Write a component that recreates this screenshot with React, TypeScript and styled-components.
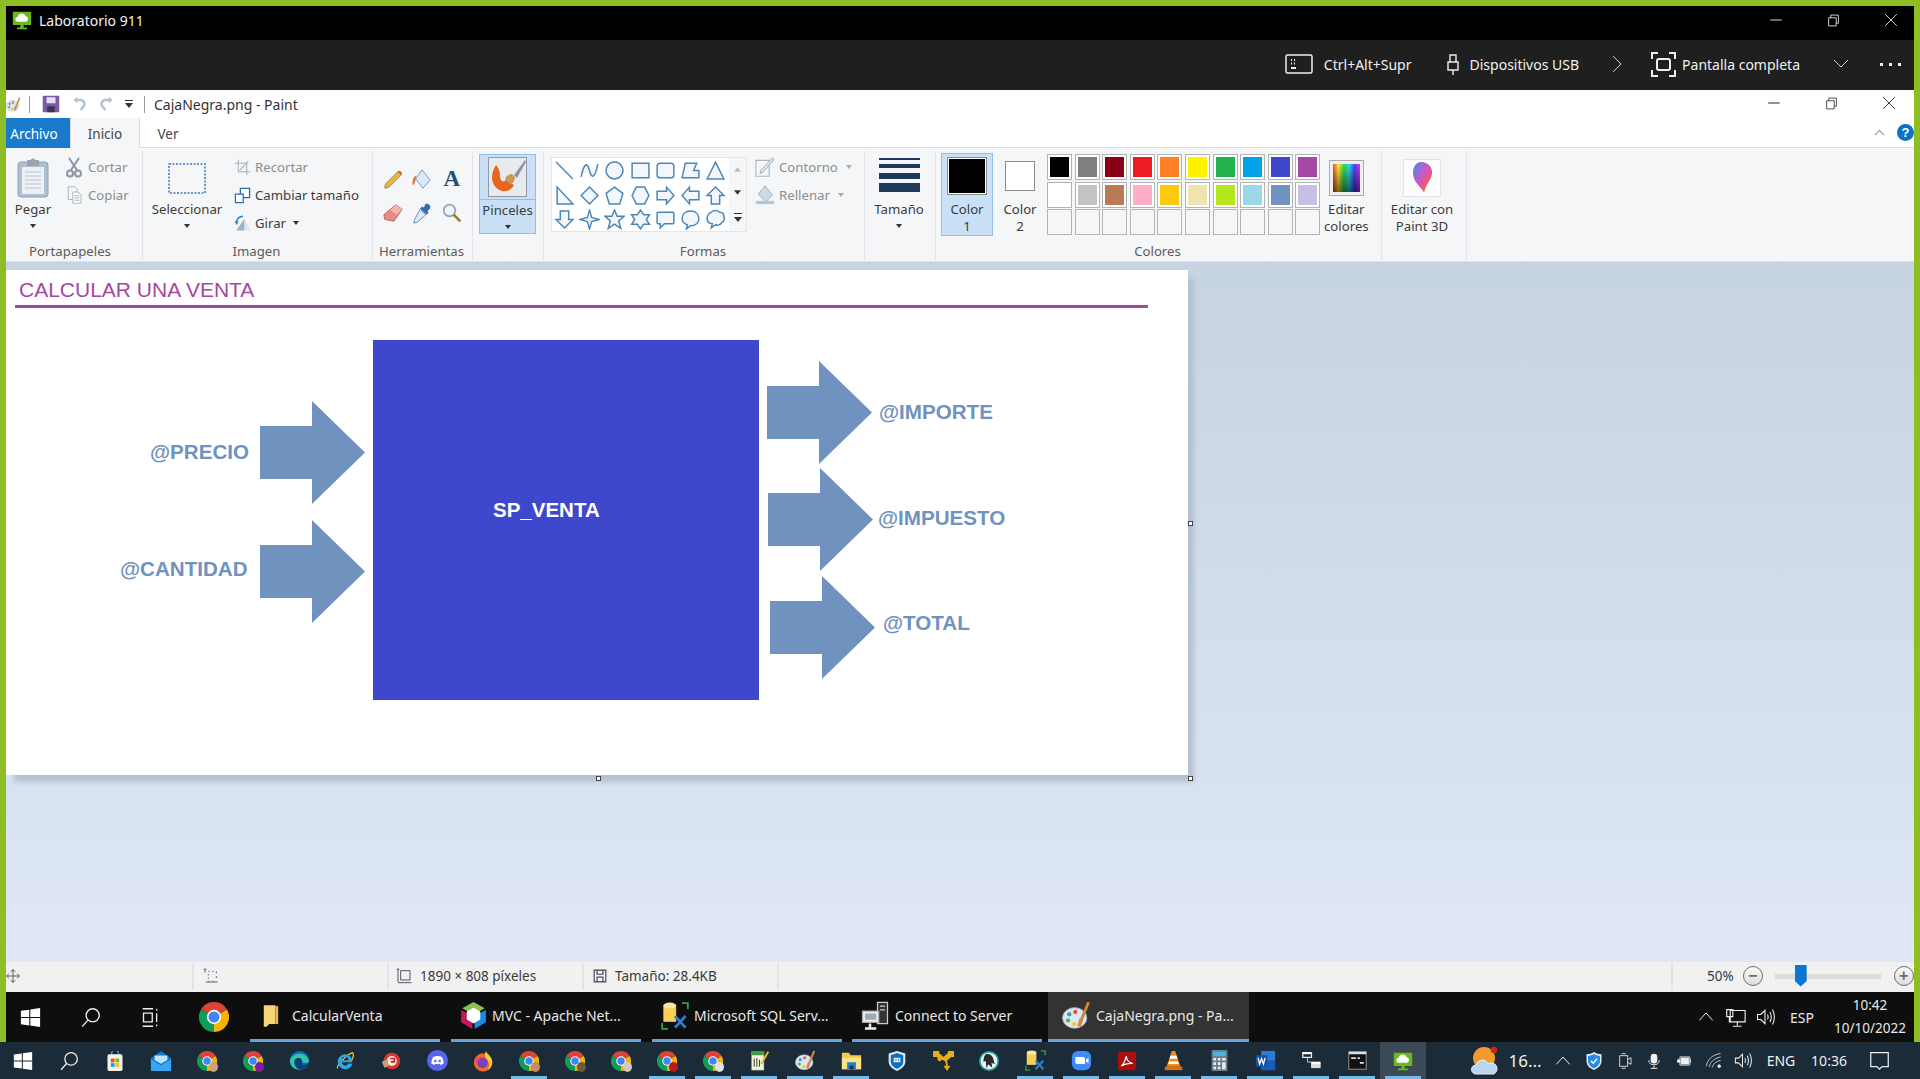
import React from "react";
import styled, { createGlobalStyle } from "styled-components";

const FONT = '"Noto Sans", "Open Sans", sans-serif';
const ARIAL = '"Liberation Sans", Arial, sans-serif';

const Global = createGlobalStyle`
  html, body { margin: 0; padding: 0; background: #1c2b36; overflow: hidden; }
  * { box-sizing: border-box; }
  #root { height: 1079px; }
`;

/* ---------- shell ---------- */
const Page = styled.div`
  width: 1920px; height: 1079px; display: flex; flex-direction: column;
  font-family: ${FONT}; font-size: 14px; color: #3a3a3a;
`;
const Frame = styled.div`
  height: 1042px; display: flex; flex-direction: column;
  border: 6px solid #8fbd24; border-bottom: 0;
`;
const RdpTitle = styled.div`
  height: 34px; flex: none; background: #000; color: #f2f2f2; display: flex; align-items: center;
  padding: 0 0 6px 6px; gap: 7px; font-size: 14px;
`;
const RdpBar = styled.div`
  height: 50px; flex: none; background: #1f1f1f; color: #f0f0f0; display: flex; align-items: center;
  padding-bottom: 2px; font-size: 14px;
`;
const Push = styled.div`flex: 1;`;
const WinButtons = styled.div<{ $dy?: number; $w?: number }>`
  margin-left: auto; margin-top: ${p => p.$dy ?? 0}px; display: flex; align-items: center; width: ${p => p.$w ?? 153}px; padding-left: 8px; gap: 44px;
`;
const BarItem = styled.div<{ $ml: number; $gap?: number }>`
  display: flex; align-items: center; margin-left: ${p => p.$ml}px; gap: ${p => p.$gap ?? 0}px; white-space: nowrap;
`;
const PaintTitle = styled.div`
  height: 28px; flex: none; background: #fff; display: flex; align-items: center; color: #333; font-size: 14px;
`;
const Divider = styled.span<{ $ml: number }>`
  width: 1px; height: 17px; background: #9b9b9b; margin-left: ${p => p.$ml}px;
`;
const Tabs = styled.div`
  height: 30px; flex: none; background: #fff; display: flex; align-items: stretch; font-size: 13.5px;
  border-bottom: 1px solid #dadbdc; position: relative;
`;
const FileTab = styled.div`
  width: 64px; background: #1979ca; color: #fff; display: flex; align-items: center; justify-content: center; margin-bottom: -1px;
  padding: 2px 8px 0 0;
`;
const Tab = styled.div<{ $active?: boolean }>`
  width: ${p => (p.$active ? 70 : 56)}px; display: flex; align-items: center; justify-content: center; padding-top: 2px;
  color: #444;
  ${p => p.$active ? "background:#f5f6f7;border:1px solid #dadbdc;border-bottom:0;border-top:0;margin-bottom:-1px;" : ""}
`;
const TabEnd = styled.div`
  margin-left: auto; display: flex; align-items: center; gap: 12px;
`;
const Help = styled.div`
  width: 17px; height: 17px; border-radius: 50%; background: #0e72c4; color: #fff; font: bold 13px ${ARIAL};
  display: flex; align-items: center; justify-content: center;
`;

/* ---------- ribbon ---------- */
const Ribbon = styled.div`
  height: 114px; flex: none; display: flex; background: #f5f6f7; border-bottom: 1px solid #dfe2e6;
  font-size: 13.2px; padding: 3px 0 1px; color: #3c3c3c;
`;
const Group = styled.section<{ $w: number }>`
  width: ${p => p.$w}px; flex: none; display: flex; flex-direction: column; border-right: 1px solid #e2e4e7;
`;
const GroupBody = styled.div`flex: 1; display: flex; align-items: flex-start; padding-top: 3px;`;
const GroupLabel = styled.div<{ $pr?: number }>`
  height: 17px; line-height: 17px; text-align: center; color: #5b5b5b; font-size: 13.2px; padding-right: ${p => p.$pr ?? 2}px;
`;
const BigTool = styled.div<{ $w: number; $ml?: number }>`
  width: ${p => p.$w}px; margin-left: ${p => p.$ml ?? 0}px; flex: none; display: flex; flex-direction: column; align-items: center;
  padding-top: 3px;
`;
const BigIcon = styled.div`height: 42px; width: 100%; display: flex; align-items: center; justify-content: center; margin-bottom: 2px;`;
const BigLabel = styled.div`line-height: 17px; text-align: center; white-space: nowrap;`;
const Caret = styled.div`
  width: 0; height: 0; border: 3.5px solid transparent; border-top: 4px solid #333; border-bottom: 0; margin-top: 6px;
`;
const InlineCaret = styled(Caret)<{ $muted?: boolean }>`
  margin: 0 0 0 4px; ${p => p.$muted ? "border-top-color:#aaa;" : ""}
`;
const SmallList = styled.div<{ $ml: number }>`margin: -1px 0 0 ${p => p.$ml}px; display: flex; flex-direction: column;`;
const SmallRow = styled.div<{ $muted?: boolean; $gap?: number }>`
  height: 28px; display: flex; align-items: center; gap: ${p => p.$gap ?? 6}px; white-space: nowrap;
  color: ${p => (p.$muted ? "#8d8d8d" : "#3c3c3c")};
`;
const ToolGrid = styled.div`
  margin: 8px 0 0 5px; display: grid; grid-template-columns: repeat(3, 29.5px); grid-auto-rows: 34px;
  place-items: center;
`;
const Brushes = styled.div`
  margin: 0 0 0 6px; width: 57px; height: 80px; background: #c9e0f7; border: 1px solid #90c0ea; display: flex;
  flex-direction: column; align-items: center;
`;
const BrushTop = styled.div`
  width: 100%; height: 45px; display: flex; align-items: center; justify-content: center; border-bottom: 1px solid #90c0ea; margin-bottom: 2px;
`;
const Gallery = styled.div`
  margin: 3px 0 0 7px; width: 196px; height: 75px; border: 1px solid #e3e5e8; display: flex; flex: none;
`;
const ShapeGrid = styled.div`
  width: 177px; background: #fff; display: grid; grid-template-columns: repeat(7, 25.2px); grid-auto-rows: 24.7px; place-items: center;
`;
const GalleryScroll = styled.div`
  flex: 1; display: flex; flex-direction: column; align-items: center; justify-content: space-around; color: #444;
`;
const Lines = styled.div`
  width: 41px; height: 35px; margin-bottom: 6px; display: flex; flex-direction: column; justify-content: space-between;
`;
const Line = styled.div<{ $h: number }>`height: ${p => p.$h}px; background: #1d3a5c;`;
const ColorSlot = styled.div<{ $active?: boolean }>`
  width: 52px; height: 83px; margin: -1px 0 0 ${p => (p.$active ? 5 : 1)}px; flex: none; display: flex; flex-direction: column; align-items: center;
  ${p => p.$active ? "background:#c9e0f7;border:1px solid #90c0ea;" : "border:1px solid transparent;"}
`;
const SwatchWrap = styled.div`height: 47px; display: flex; align-items: center; justify-content: center; margin-bottom: 4px;`;
const BigSwatch = styled.div<{ $c: string; $s: number; $h: number }>`
  width: ${p => p.$s}px; height: ${p => p.$h}px; background: ${p => p.$c}; border: 1px solid #8c8c8c; outline: 1px solid #fff; outline-offset: -2px;
`;
const Palette = styled.div`
  margin: 0 0 0 1px; display: grid; grid-template-columns: repeat(10, 25px); grid-auto-rows: 26px; gap: 1.5px 2.6px; flex: none;
`;
const Cell = styled.div<{ $c?: string }>`
  border: 1px solid #b4b4b4; padding: 2px; background: ${p => (p.$c ? "#fff" : "#f5f6f7")};
  &::after { content: ""; display: block; width: 100%; height: 100%; background: ${p => p.$c ?? "transparent"}; }
`;
const RainbowBox = styled.div`
  width: 35px; height: 36px; padding: 3px; background: #eee; border: 1px solid #aaa;
  & > div { height: 100%; background:
     linear-gradient(to bottom, rgba(255,255,255,.1), rgba(0,0,0,.55)),
     linear-gradient(to right, #ff3030, #ffee20, #20d040, #20d0e0, #3030ff, #e020e0); }
`;

/* ---------- canvas ---------- */
const Canvas = styled.main`
  flex: 1; min-height: 0; background: linear-gradient(#c6d3e0, #dfe8f4); padding-top: 8px; position: relative;
`;
const Sheet = styled.div`
  width: 1182px; height: 505px; background: #fff; position: relative; box-shadow: 7px 8px 5px -1px #b4c1d2;
  font-family: ${ARIAL};
`;
const SheetTitle = styled.div`
  position: absolute; left: 13px; top: 8px; font-size: 21px; line-height: 24px; color: #a3479f; white-space: nowrap;
`;
const SheetRule = styled.div`position: absolute; left: 9px; top: 35px; width: 1133px; height: 3px; background: #9f4d9f;`;
const BlueBox = styled.div`
  position: absolute; left: 367px; top: 70px; width: 386px; height: 360px; background: #3f48cc;
`;
const BoxLabel = styled.div`
  position: absolute; left: 120px; top: 158px; color: #fff; font-weight: bold; font-size: 20.5px; line-height: 24px;
`;
const ArrowShape = styled.svg<{ $x: number; $y: number }>`
  position: absolute; left: ${p => p.$x}px; top: ${p => p.$y}px; width: 105px; height: 103px;
`;
const Param = styled.div<{ $x: number; $y: number }>`
  position: absolute; left: ${p => p.$x}px; top: ${p => p.$y}px; color: #7092be; font-weight: bold; font-size: 20.6px; line-height: 26px; white-space: nowrap;
`;
const Handle = styled.div<{ $x: number; $y: number }>`
  position: absolute; left: ${p => p.$x}px; top: ${p => p.$y}px; width: 5px; height: 5px; border: 1px solid #444; background: #fff;
`;

/* ---------- status ---------- */
const Status = styled.footer`
  height: 31px; flex: none; background: #f1f1f1; border-top: 1px solid #e3e5e8; display: flex; align-items: center; font-size: 13.5px; color: #3a3a3a;
  padding-bottom: 2px;
`;
const StatusCell = styled.div<{ $w: number; $pl: number }>`
  width: ${p => p.$w}px; height: 27px; border-right: 2px solid #e4e4e4; padding-left: ${p => p.$pl}px; display: flex; align-items: center; gap: 8px; white-space: nowrap;
`;
const ZoomBox = styled.div`
  margin-left: auto; width: 243px; height: 27px; border-left: 2px solid #e4e4e4; display: flex; align-items: center; padding-left: 34px;
`;
const ZoomPct = styled.span`margin-right: 9px;`;
const ZoomTrack = styled.div`
  width: 106px; height: 5px; background: #dcdcdc; margin: 0 13px 0 12px; position: relative;
`;
const ZoomThumb = styled.div`
  position: absolute; left: 20px; top: -9px; width: 12px; height: 22px; background: #0a78d2;
  clip-path: polygon(0 0, 100% 0, 100% 75%, 50% 100%, 0 75%);
`;
const RoundBtn = styled.div`
  width: 20px; height: 20px; border-radius: 50%; border: 1.5px solid #6d6d6d; display: flex; align-items: center; justify-content: center;
  font: bold 16px ${ARIAL}; color: #6d6d6d; flex: none; background: linear-gradient(#fafafa, #dcdcdc);
`;

/* ---------- inner taskbar ---------- */
const InnerBar = styled.nav`
  height: 50px; flex: none; background: #0e0e0e; color: #e8e8e8; display: flex; align-items: center; font-size: 14px;
`;
const InnerSlot = styled.div<{ $w: number; $ml: number }>`
  width: ${p => p.$w}px; margin-left: ${p => p.$ml}px; flex: none; display: flex; align-items: center; justify-content: center;
`;
const AppBtn = styled.div<{ $w?: number; $ml: number; $active?: boolean; $pl: number; $gap?: number }>`
  width: ${p => p.$w ?? 190}px; margin-left: ${p => p.$ml}px; height: 50px; flex: none; display: flex; align-items: center; gap: ${p => p.$gap ?? 5}px;
  padding-left: ${p => p.$pl}px; border-bottom: 3px solid #6a9fd8; white-space: nowrap;
  background: ${p => (p.$active ? "#333" : "transparent")};
`;
const Tray = styled.div`
  margin-left: auto; display: flex; align-items: center; color: #e8e8e8;
`;
const TrayItem = styled.div<{ $w: number; $ml?: number }>`
  width: ${p => p.$w}px; margin-left: ${p => p.$ml ?? 0}px; flex: none; display: flex; align-items: center; justify-content: center; white-space: nowrap;
`;
const Clock = styled.div`
  width: 70px; margin: 0 9px 0 21px; display: flex; flex-direction: column; align-items: center; font-size: 13.5px; line-height: 23px;
`;

/* ---------- outer taskbar ---------- */
const OuterBar = styled.nav`
  height: 37px; flex: none; background: #1b2b37; display: flex; align-items: stretch; color: #f0f0f0; font-size: 14px;
`;
const Slot = styled.div<{ $on?: boolean; $cur?: boolean }>`
  width: 46px; flex: none; display: flex; align-items: center; justify-content: center; position: relative;
  background: ${p => (p.$cur ? "#3b4a55" : "transparent")};
  ${p => p.$on ? `&::after{content:"";position:absolute;left:5px;right:5px;bottom:0;height:3px;background:#76b9ed;}` : ""}
`;
const OuterTray = styled.div`margin-left: auto; display: flex; align-items: center; color: #f0f0f0;`;
const OTray = styled.div<{ $w: number; $ml?: number; $fs?: number }>`
  width: ${p => p.$w}px; margin-left: ${p => p.$ml ?? 0}px; flex: none; display: flex; align-items: center; justify-content: center;
  white-space: nowrap; font-size: ${p => p.$fs ?? 14}px;
`;
const Stack = styled.div`position: relative; display: inline-flex;`;
const Badge = styled.span<{ $c: string }>`
  position: absolute; right: -1px; bottom: -1px; width: 9px; height: 10px; border-radius: 50%; background: ${p => p.$c};
`;
const BlockSvg = styled.svg`display: block; flex: none;`;
const AText = styled.span`font: bold 23px "Liberation Serif", serif; color: #1f4e79; line-height: 22px;`;

/* ---------- icons ---------- */
type P = { s?: number; h?: number; c?: string };
const Svg: React.FC<React.PropsWithChildren<{ s: number; h?: number; vb?: string; sc?: string; sw?: number }>> = ({ s, h, vb = "0 0 24 24", sc, sw, children }) => (
  <BlockSvg width={s} height={h ?? s} viewBox={vb} fill="none" stroke={sc} strokeWidth={sw}>{children}</BlockSvg>
);
const WinLogo = ({ s = 20 }: P) => (
  <Svg s={s}><path fill="#fff" d="M1 4.200 10.600 3v8.500H1zM11.800 2.800 23 1.200v10.300H11.800zM1 12.600h9.600V21L1 19.800zM11.800 12.600H23v10.200l-11.200-1.600z" /></Svg>
);
const SearchI = ({ s = 20 }: P) => (
  <Svg s={s} sc="#f0f0f0" sw={1.500}><circle cx="14.500" cy="9.500" r="7.500" /><path d="M9 15 2.500 22.500" /></Svg>
);
const TaskView = ({ s = 20 }: P) => (
  <Svg s={s} sc="#eee" sw={1.500}><path d="M3 2h12M3 22h12M4 7h10v10H4zM19 2v2M19 7v10M19 20v2" /></Svg>
);
const Chrome = ({ s = 20 }: P) => (
  <Svg s={s} vb="3 3 42 42">
    <path fill="#db4437" d="M24 24 5.800 13.500A21 21 0 0 1 42.200 13.500Z" />
    <path fill="#f4b400" d="M24 24 42.200 13.500A21 21 0 0 1 24 45Z" />
    <path fill="#0f9d58" d="M24 24 24 45A21 21 0 0 1 5.800 13.500Z" />
    <circle cx="24" cy="24" r="10" fill="#fff" /><circle cx="24" cy="24" r="7.800" fill="#4285f4" />
  </Svg>
);
const ChromeB = ({ c }: { c: string }) => <Stack><Chrome /><Badge $c={c} /></Stack>;
const FolderI = ({ s = 20, h = 24 }: P) => (
  <Svg s={s} h={h} vb="0 0 20 26"><path fill="#f5d576" d="M2 1h13v21H8l-3 3H2z" /><path fill="#e5b94e" d="M15 2h3v20h-3z" /></Svg>
);
const Hexa = ({ s = 26 }: P) => (
  <Svg s={s}>
    <path fill="#8bc34a" d="M12 0 22 5.500 12 11 2 5.500z" /><path fill="#c2185b" d="M1 7l10 5.500V24L1 18z" /><path fill="#1e88e5" d="M23 7 13 12.500V24l10-6z" />
    <path fill="#fff" d="M12 5 18 8.500v7L12 19l-6-3.500v-7z" />
  </Svg>
);
const Ssms = ({ s = 26 }: P) => (
  <Svg s={s}>
    <path fill="none" stroke="#2e9e4f" strokeWidth="1.600" d="M18 1h5v5M1 18v5h5" />
    <path fill="#f6cf57" d="M2 3h11v14H2z" /><ellipse cx="7.500" cy="3" rx="5.500" ry="2.500" fill="#fbe6a0" />
    <path fill="none" stroke="#2a7fd0" strokeWidth="2.400" d="M12 22l9-10M21 22l-9-10" />
  </Svg>
);
const Connect = ({ s = 30 }: P) => (
  <Svg s={s} sc="#ccc" sw={1}>
    <path fill="#333" d="M14 1h8v17h-8z" /><path d="M16 4h4M16 7h4" />
    <path fill="#eee" stroke="#aaa" d="M2 8h13v9H2z" /><path fill="#9ab" stroke="none" d="M4 10h9v5H4z" />
    <path stroke="#eee" strokeWidth="2" d="M8 18v3M4 22h9" />
  </Svg>
);
const Palette3 = ({ s = 28 }: P) => (
  <Svg s={s}>
    <ellipse cx="10.500" cy="14" rx="10" ry="8.500" fill="#dce7f0" stroke="#a3b4c4" strokeWidth=".8" />
    <circle cx="6" cy="11" r="1.800" fill="#3f9ad8" /><circle cx="11" cy="9" r="1.700" fill="#e94e3d" /><circle cx="5" cy="16" r="1.800" fill="#5bb450" />
    <circle cx="10" cy="19" r="1.700" fill="#f5c22e" />
    <path stroke="#c9893a" strokeWidth="2.400" d="M22 1l-7 17" /><path stroke="#e08535" strokeWidth="3" d="M16 15l-2 6" />
  </Svg>
);
const Store = () => (
  <Svg s={20}>
    <path fill="none" stroke="#29a3e8" strokeWidth="1.500" d="M8 5V3a4 4 0 0 1 8 0v2" />
    <rect x="3" y="4" width="18" height="20" rx="2" fill="#f4f1ea" />
    <path fill="#f25022" d="M7 9h4.500v4.500H7z" /><path fill="#7fba00" d="M12.500 9H17v4.500h-4.500z" /><path fill="#00a4ef" d="M7 14.500h4.500V19H7z" /><path fill="#ffb900" d="M12.500 14.500H17V19h-4.500z" />
  </Svg>
);
const Mail = () => (
  <Svg s={22}><path fill="#0f78d4" d="M1 9 12 1l11 8v14H1z" /><path fill="#39a7ee" d="M1 10l11 7 11-7v13H1z" /><path fill="#bfe3fb" d="M5 6h14v5l-7 4-7-4z" /></Svg>
);
const Edge = () => (
  <Svg s={21}>
    <circle cx="12" cy="12" r="11" fill="#0f6cbd" />
    <path fill="#35c1a4" d="M1 12C3 3 20 0 23 13c-3 3-8 2-9-1 0-3-5-4-7-1-2 4 0 9 5 11C6 23 1 18 1 12z" />
    <path fill="#0c3f78" d="M7 11c3-3 8-2 8 2-2 5 5 5 8 1-2 6-9 10-13 7-3-2-5-7-3-10z" />
  </Svg>
);
const IE = () => (
  <Svg s={20}>
    <path fill="none" stroke="#f3c31c" strokeWidth="1.500" d="M3 21C1 17 15 4 21 2c3 3-1 9-2 10" />
    <path fill="#2da7e6" fillRule="evenodd" d="M12 4a9 9 0 0 1 9 9.500H8a4.200 4.200 0 0 0 8 1.500h5a9 9 0 1 1-9-11zM8 11h8a4 4 0 0 0-8 0z" />
  </Svg>
);
const RedDisc = () => (
  <Svg s={20}>
    <circle cx="13" cy="12" r="10" fill="#d5392b" /><circle cx="13" cy="12" r="6" fill="#f7e9e2" />
    <path fill="#c9a07c" d="M1 13l7-3 1 8-5 2z" /><path stroke="#c22" strokeWidth="2" d="M11 9h5v4h-4" />
  </Svg>
);
const Discord = () => (
  <Svg s={21}>
    <circle cx="12" cy="12" r="12" fill="#5865f2" />
    <path fill="#fff" d="M7 8c3-1.400 7-1.400 10 0 1.500 2.500 2 5 2 7.500-1.500 1-2.500 1.500-3.500 1.600l-.8-1.300c-2 .6-3.400.6-5.400 0l-.8 1.300C8 17 6.500 16.500 5 15.500 5 13 5.500 10.500 7 8z" />
    <circle cx="9.500" cy="12.500" r="1.400" fill="#5865f2" /><circle cx="14.500" cy="12.500" r="1.400" fill="#5865f2" />
  </Svg>
);
const Firefox = () => (
  <Svg s={22}>
    <circle cx="12" cy="13.500" r="10" fill="#f26b21" />
    <path fill="#ffcb2f" d="M15 1c1 3 6 5 7 11 1 4-2 9-5 10 3-4 2-10-2-13-1-2-1-5 0-8z" />
    <circle cx="11.500" cy="14" r="5.800" fill="#7a3fc4" /><path fill="#e8467c" d="M4 10c3-3 7-3 9-2-3 0-4 2-5 3-2 1-3 3-1 7-3-2-4-5-3-8z" />
  </Svg>
);
const Notepad = () => (
  <Svg s={21}>
    <path fill="#f3f6d8" stroke="#9aa" strokeWidth=".6" d="M3 2h14v21H3z" /><path fill="#3f9c3f" d="M3 2h14v4H3z" />
    <path stroke="#444" strokeWidth="1.200" d="M6 10v9M9 9v10M12 11v8" /><path stroke="#e6b93b" strokeWidth="2.200" d="M22 2 14 16" />
  </Svg>
);
const Explorer = () => (
  <Svg s={21}>
    <path fill="#f7c948" d="M1 3h8l2 3h12v16H1z" /><path fill="#fbe38e" d="M1 9h22v13H1z" />
    <path fill="#1c7fd0" d="M7 14h10v8H7z" /><path fill="#1b2b37" d="M10 18h4v4h-4z" />
  </Svg>
);
const ShieldGrid = () => (
  <Svg s={20}>
    <path fill="#dfe9f4" d="M12 0 22 3v10c0 5-5 9-10 11C7 22 2 18 2 13V3z" /><path fill="#0e6fc1" d="M12 2.500 19.500 5v8c0 4-4 7-7.500 8.500C8.500 20 4.500 17 4.500 13V5z" />
    <path fill="#fff" d="M8 8h2.500v2.500H8zM11 8h2.500v2.500H11zM14 8h2v2.500h-2zM8 11h2.500v2.500H8zM11 11h2.500v2.500H11zM14 11h2v2.500h-2z" />
  </Svg>
);
const YellowArrows = () => (
  <Svg s={21}>
    <path fill="#e6ad1e" d="M0 1h7v2.500L12 8l5-4.500V1h7v7h-3l-5 4 1 6h3l-4 6-4-6h3l-1-5-3-2-4 2-2-2.500V8H0z" />
  </Svg>
);
const Orb = () => (
  <Svg s={20}>
    <circle cx="12" cy="12" r="11" fill="#e9f4f2" stroke="#23a0a0" strokeWidth="2" />
    <path fill="#2b2b2b" d="M8 4c4-1 8 1 9 5l2 7-4-2 1 6-5-4-2 5-1-9-3 1c1-3 0-6 3-9z" />
  </Svg>
);
const Zoom = () => (
  <Svg s={21}><rect x="1" y="1" width="22" height="22" rx="7" fill="#3d8bfd" /><path fill="#fff" d="M5 8h9a2 2 0 0 1 2 2v6H7a2 2 0 0 1-2-2zM17 11l3-2.500v7L17 13z" /></Svg>
);
const Pdf = () => (
  <Svg s={20}><rect x="1" y="1" width="22" height="22" rx="3" fill="#a90f0f" /><path fill="none" stroke="#fff" strokeWidth="1.500" d="M5 18c3-2 5-7 6-12 .5 5 3 8 8 9-5-.5-10 .5-14 3z" /></Svg>
);
const Vlc = () => (
  <Svg s={21}>
    <path fill="#f08a1c" d="M10 1h4l6 18H4z" /><path fill="#fff" d="M8.500 6.500h7l1 3.500h-9zM7 13h10l1 3H6z" /><path fill="#e26d12" d="M2 19h20v4H2z" />
  </Svg>
);
const Calc = () => (
  <Svg s={17} h={21} vb="0 0 18 24">
    <rect width="18" height="24" rx="1" fill="#6f7d89" /><path fill="#45b6e6" d="M2 2h14v5H2z" />
    <path fill="#e8eef3" d="M2 9h3v3H2zM7 9h3v3H7zM12 9h4v3h-4zM2 14h3v3H2zM7 14h3v3H7zM12 14h4v8h-4zM2 19h3v3H2zM7 19h3v3H7z" />
  </Svg>
);
const Word = () => (
  <Svg s={21}>
    <path fill="#2b7cd3" d="M7 1h16v22H7z" /><path fill="#185abd" d="M7 12h16v11H7z" /><rect x="1" y="6" width="13" height="13" fill="#1253a8" />
    <path fill="none" stroke="#fff" strokeWidth="1.500" d="M3.500 9l1.800 7 2.200-6 2.200 6 1.800-7" />
  </Svg>
);
const NetWin = () => (
  <Svg s={19}>
    <path fill="#222" stroke="#eee" strokeWidth="1.500" d="M1 2h11v6H1z" /><path stroke="#eee" d="M7 8v6h5" /><path fill="#ddd" stroke="#eee" d="M12 14h11v7H12z" /><path fill="#fff" d="M1 2h11v2H1zM12 14h11v2H12z" />
  </Svg>
);
const Cmd = () => (
  <Svg s={19}><rect x="1" y="1" width="22" height="22" fill="#111" stroke="#999" strokeWidth="1.200" /><path fill="#ddd" d="M1 1h22v3H1zM4 8h6v2H4zM12 8h3v2h-3zM15 14h5v2h-5z" /></Svg>
);
const MonitorGreen = ({ s = 20 }: P) => (
  <Svg s={s}>
    <rect x="1" y="2" width="22" height="16" rx="1" fill="#6ab820" /><path fill="#6ab820" d="M10 18h4v3h4v2H6v-2h4z" />
    <path fill="#fff" d="M7 14a3 3 0 0 1 0-6 5 5 0 0 1 9.500-.5A3.400 3.400 0 0 1 17 14z" />
  </Svg>
);
const Weather = () => (
  <Svg s={30} vb="0 0 30 30">
    <circle cx="14" cy="12" r="11" fill="#f29a2e" /><circle cx="24" cy="4" r="3.200" fill="#c5281c" />
    <path fill="#b8d6f2" stroke="#e2eefa" d="M6 28a4.500 4.500 0 0 1 0-9 6.500 6.500 0 0 1 12-1.500A5.500 5.500 0 0 1 24 28z" />
  </Svg>
);
const Shield = () => (
  <Svg s={18} h={20}>
    <path fill="#e4eef8" d="M12 0c3 2 6 3 10 3v9c0 6-5 10-10 12C7 22 2 18 2 12V3c4 0 7-1 10-3z" /><path fill="#2a8ae6" d="M12 2.500c2.500 1.500 5 2.500 8 2.500v7c0 5-4 8-8 9.800C8 20 4 17 4 12V5c3 0 5.500-1 8-2.500z" />
    <path fill="none" stroke="#fff" strokeWidth="2" d="M8 12l3 3 5-6" />
  </Svg>
);
const Speaker = ({ s = 20 }: P) => (
  <Svg s={s} sc="#eee" sw={1.300}><path d="M3 9h4l5-5v16l-5-5H3zM15 9c1 2 1 4 0 6M18 6c2 4 2 8 0 12M21 3c3 6 3 12 0 18" /></Svg>
);
const Up = ({ s = 16 }: P) => (<Svg s={s} sc="#eee" sw={1.500}><path d="M2 17 12 6l10 11" /></Svg>);

/* ribbon icons */
const Clipboard = () => (
  <Svg s={34} h={40} vb="0 0 34 40">
    <rect x="2" y="4" width="30" height="35" rx="3" fill="#aebfd2" stroke="#8fa3b8" />
    <rect x="6" y="9" width="22" height="27" fill="#eef1f4" />
    <path stroke="#b9c4d1" d="M9 14h16M9 18h16M9 22h16M9 26h16M9 30h16" />
    <rect x="11" y="2" width="12" height="6" rx="1" fill="#9aa4ae" /><circle cx="17" cy="3" r="2.500" fill="#9aa4ae" />
  </Svg>
);
const Scissors = () => (
  <Svg s={16} h={21} vb="0 0 16 21" sc="#8996a3" sw={2}><path d="M3 1l8 12M13 1 5 13" /><circle cx="4" cy="16.500" r="3" /><circle cx="12" cy="16.500" r="3" /></Svg>
);
const CopyI = () => (
  <Svg s={18} h={20} sc="#a5afba" sw={1.200}><path fill="#f5f6f7" d="M3 1h9l3 3v14H3z" /><path fill="#fff" d="M9 8h7l4 4v11H9z" /><path d="M11 13h7M11 16h7M11 19h7" /></Svg>
);
const SelectRect = () => (<BlockSvg width="38" height="31"><rect x="1" y="1" width="36" height="29" fill="none" stroke="#3c78b5" strokeWidth="1.500" strokeDasharray="2 1.500" /></BlockSvg>);
const CropI = () => (
  <Svg s={17} sc="#a9b1ba" sw={1.500}><path d="M6 1v17h17M1 6h17v17" /><path d="M8 16 20 3" /></Svg>
);
const ResizeI = () => (
  <Svg s={17} sc="#2a6db5" sw={1.800}><path fill="#fff" d="M9 2h13v13H9z" /><path fill="#fff" d="M2 10h11v12H2z" /></Svg>
);
const RotateI = () => (
  <Svg s={18}><path fill="#9bb0c4" d="M3 22 14 6v16z" /><path fill="#dfe5eb" d="M14 6l8 16h-8z" /><path fill="none" stroke="#1f86d0" strokeWidth="2" d="M3 12C4 6 8 3 12 3" /><path fill="#1f86d0" d="M1 10h5l-2.500 5z" /></Svg>
);
const Pencil = () => (<Svg s={20}><path fill="#e4b54a" stroke="#a97d22" d="M18 3l4 4L7 22l-5 1 1-5z" /><path fill="#c5533a" d="M18 3l2-1 3 3-1 2z" /></Svg>);
const Bucket = () => (<Svg s={22}><path fill="#dbe8f5" stroke="#6a96bf" d="M12 2l9 11-8 9-8-10z" /><path fill="#e9743a" d="M6 8C2 10 1 15 2 19c3-2 3-7 4-11z" /></Svg>);
const TextA = () => (<AText>A</AText>);
const Eraser = () => (<Svg s={22}><path fill="#e58a85" stroke="#b86460" d="M15 3l7 5-9 13-10-2-1-5z" /><path fill="#f4b4ac" d="M15 3l7 5-6 6-7-5z" /></Svg>);
const Dropper = () => (<Svg s={22}><path fill="#2f6fa6" d="M16 2c3-1 6 2 5 5l-3 3 1 2-2 2-7-7 2-2 2 1z" /><path fill="#dcebf7" stroke="#5a8ab5" d="M10 8l6 6-9 8-4 1 1-4z" /></Svg>);
const Magnifier = () => (<Svg s={20}><circle cx="9" cy="9" r="7" fill="#eef4fa" stroke="#8ea4b9" strokeWidth="2" /><path stroke="#a66f30" strokeWidth="3" d="M14 14l8 8" /></Svg>);
const BrushBig = () => (
  <BlockSvg width="39" height="40" viewBox="0 0 39 40">
    <rect x=".5" y=".5" width="38" height="39" fill="#e8ebee" stroke="#8f9aa4" />
    <path fill="#e8651d" d="M8 8c-6 9-6 22 6 26 6 1 10-2 12-6l-8-5c-3 3-6 1-6-4 0-4-1-8-4-11z" />
    <path fill="#c8995a" d="M17 22c2-4 5-5 7-5l3 3c0 3-2 7-5 7z" />
    <path fill="#8d98a6" d="M26 18 37 3l1 2-9 16z" />
  </BlockSvg>
);
const Contour = () => (<Svg s={20}><path fill="#f5f6f7" stroke="#a8b6c4" strokeWidth="1.300" d="M1 4h16v19H1z" /><path fill="#dfe5eb" stroke="#93a3b3" d="M21 1l2 2-13 15-4 2 1-4z" /></Svg>);
const Fill = () => (<Svg s={20}><path fill="#cfd9e3" stroke="#94a7ba" d="M12 1l9 11-8 8-9-9z" /><path fill="#b7c6d5" d="M1 19h22v4H1z" /></Svg>);
const P3D = () => (
  <BlockSvg width="38" height="38" viewBox="0 0 38 38">
    <defs>
      <linearGradient id="p3d" x1="0" y1="0" x2="1" y2="1"><stop offset="0" stopColor="#3d8fe8" /><stop offset=".45" stopColor="#c95ac6" /><stop offset=".7" stopColor="#f0566a" /><stop offset="1" stopColor="#f5a030" /></linearGradient>
    </defs>
    <rect x=".5" y=".5" width="37" height="37" fill="#fdfdfd" stroke="#e4e4e4" />
    <path fill="url(#p3d)" d="M18 3c7 0 12 5 11 12-1 6-6 10-8 19-2-6-11-10-11-20 0-6 3-11 8-11z" />
  </BlockSvg>
);

const SHAPES: string[] = [
  "M2 2 18 18", "M2 16C5 2 8 2 10 10S15 18 18 4", "M10 2a8 8 0 1 0 .01 0z", "M2 3h16v14H2z", "M5 3h10a3 3 0 0 1 3 3v8a3 3 0 0 1-3 3H5a3 3 0 0 1-3-3V6a3 3 0 0 1 3-3z", "M2 17 5 3h11l-3 7h5v7z", "M10 2 18 18H2z",
  "M3 2V18H18z", "M10 2 18 10 10 18 2 10z", "M10 2 18 8 15 18H5L2 8z", "M6 2h8l4 8-4 8H6l-4-8z", "M2 6h9V2l7 8-7 8v-4H2z", "M18 6H9V2l-7 8 7 8v-4h9z", "M10 2l8 8h-4v8H6v-8H2z",
  "M10 18l8-8h-4V2H6v8H2z", "M10 1l2 7 7 2-7 2-2 7-2-7-7-2 7-2z", "M10 1l2.500 6H19l-5 4.500 2 7-6-4-6 4 2-7-5-4.500h6.500z", "M10 1l3 4.500h5.500l-3 4.500 3 4.500H13l-3 4.500-3-4.500H1.500l3-4.500-3-4.500H7z", "M3 3h14a1 1 0 0 1 1 1v9a1 1 0 0 1-1 1H9l-4 4v-4H3a1 1 0 0 1-1-1V4a1 1 0 0 1 1-1z", "M10 2c5 0 8 3 8 7s-3 7-8 7l-4 3 1-4C4 14 2 12 2 9c0-4 3-7 8-7z", "M6 3c2-2 6-2 8 0 3 0 4 2 4 4 1 2 0 5-2 6-1 2-4 3-6 2l-4 3 1-4C4 14 2 12 2 9c0-3 2-5 4-6z",
];
const Shape = ({ d }: { d: string }) => (
  <BlockSvg width="21" height="21" viewBox="0 0 20 20"><path d={d} fill="#f1f7fc" stroke="#4d86b5" strokeWidth="1.400" /></BlockSvg>
);

const ROW1 = ["#000000", "#7f7f7f", "#880015", "#ed1c24", "#ff7f27", "#fff200", "#22b14c", "#00a2e8", "#3f48cc", "#a349a4"];
const ROW2 = ["#ffffff", "#c3c3c3", "#b97a57", "#ffaec9", "#ffc90e", "#efe4b0", "#b5e61d", "#99d9ea", "#7092be", "#c8bfe7"];

const Arrow = ({ x, y }: { x: number; y: number }) => (
  <ArrowShape $x={x} $y={y} viewBox="0 0 105 103"><polygon points="0,25 52,25 52,0 105,51.500 52,103 52,78 0,78" fill="#7092be" /></ArrowShape>
);

const SLOTS: { i: React.ReactNode; on?: boolean; cur?: boolean }[] = [
  { i: <WinLogo /> }, { i: <SearchI /> }, { i: <Store /> }, { i: <Mail /> },
  { i: <ChromeB c="#c9a27e" /> }, { i: <ChromeB c="#7b1fa2" /> }, { i: <Edge /> }, { i: <IE /> }, { i: <RedDisc /> }, { i: <Discord /> }, { i: <Firefox /> },
  { i: <ChromeB c="#c98a60" />, on: true }, { i: <ChromeB c="#6b5a40" /> }, { i: <ChromeB c="#d8c8c0" /> }, { i: <ChromeB c="#b71c1c" />, on: true }, { i: <ChromeB c="#dfe3e8" />, on: true },
  { i: <Notepad />, on: true }, { i: <Palette3 s={21} />, on: true }, { i: <Explorer />, on: true }, { i: <ShieldGrid /> }, { i: <YellowArrows /> }, { i: <Orb /> },
  { i: <Ssms s={21} />, on: true }, { i: <Zoom />, on: true }, { i: <Pdf />, on: true }, { i: <Vlc />, on: true }, { i: <Calc />, on: true }, { i: <Word />, on: true }, { i: <NetWin />, on: true },
  { i: <Cmd />, on: true }, { i: <MonitorGreen />, on: true, cur: true },
];

export default function App() {
  return (
    <Page>
      <Global />
      <Frame>
        <RdpTitle>
          <MonitorGreen s={20} />
          <span>Laboratorio 911</span>
          <WinButtons>
            <Svg s={14} sc="#eee" sw={1.500}><path d="M2 12h20" /></Svg>
            <Svg s={13} sc="#eee" sw={1.600}><path d="M3 7h14v15H3zM7 7V2h14v15h-4" /></Svg>
            <Svg s={14} sc="#eee" sw={1.500}><path d="M2 2l20 20M22 2 2 22" /></Svg>
          </WinButtons>
        </RdpTitle>
        <RdpBar>
          <Push />
          <BarItem $ml={0} $gap={11}>
            <BlockSvg width="28" height="20" viewBox="0 0 28 20" fill="none" stroke="#eee" strokeWidth="1.500"><rect x="1" y="1" width="26" height="18" rx="1.500" /><path d="M6 6h1M9 6h1M6 9.500h1M9 9.500h1M6 14h5" strokeWidth="2" /></BlockSvg>
            <span>Ctrl+Alt+Supr</span>
          </BarItem>
          <BarItem $ml={35} $gap={11}>
            <BlockSvg width="12" height="21" viewBox="0 0 12 21" fill="none" stroke="#eee" strokeWidth="1.400"><path d="M3 1h6v7H3zM1 8h10v8H1zM6 16v5M5 4h.01M7 4h.01" /></BlockSvg>
            <span>Dispositivos USB</span>
          </BarItem>
          <BarItem $ml={33}><Svg s={10} h={18} vb="0 0 10 18" sc="#ccc" sw={1}><path d="M1 1l8 8-8 8" /></Svg></BarItem>
          <BarItem $ml={29} $gap={6}>
            <BlockSvg width="25" height="25" viewBox="0 0 25 25" fill="none" stroke="#eee" strokeWidth="2"><path d="M1 7V1h6M18 1h6v6M24 18v6h-6M7 24H1v-6" /><rect x="6" y="7" width="13" height="11" rx="2" /></BlockSvg>
            <span>Pantalla completa</span>
          </BarItem>
          <BarItem $ml={34}><Svg s={14} h={8} vb="0 0 14 8" sc="#ccc" sw={1}><path d="M0 0l7 7 7-7" /></Svg></BarItem>
          <BarItem $ml={32}><Svg s={22} h={4} vb="0 0 22 4"><path fill="#eee" d="M0 1h3v3H0zM9 1h3v3H9zM18 1h3v3h-3z" /></Svg></BarItem>
          <BarItem $ml={12}><span /></BarItem>
        </RdpBar>
        <PaintTitle>
          <Palette3 s={15} />
          <Divider $ml={8} />
          <BarItem $ml={12}>
            <Svg s={18}><rect x="1" y="1" width="22" height="22" rx="1" fill="#7b5aa6" /><path fill="#e8e0f0" d="M6 3h12v8H6z" /><path fill="#3d3159" d="M7 15h10v8H7z" /></Svg>
          </BarItem>
          <BarItem $ml={12}><Svg s={16}><path fill="none" stroke="#b3c3d3" strokeWidth="4" d="M5 6h8a6 6 0 0 1 4 10l-4 5" /><path fill="#b3c3d3" d="M2 6l6-5v10z" /></Svg></BarItem>
          <BarItem $ml={10}><Svg s={16}><path fill="none" stroke="#b3c3d3" strokeWidth="4" d="M19 6h-8a6 6 0 0 0-4 10l4 5" /><path fill="#b3c3d3" d="M22 6l-6-5v10z" /></Svg></BarItem>
          <BarItem $ml={10}><Svg s={10} vb="0 0 10 10"><path fill="#333" d="M1 1h8v1H1zM1 4h8L5 9z" /></Svg></BarItem>
          <Divider $ml={10} />
          <BarItem $ml={9}>CajaNegra.png - Paint</BarItem>
          <WinButtons $dy={-2} $w={155}>
            <Svg s={14} sc="#444" sw={2}><path d="M2 12h20" /></Svg>
            <Svg s={13} sc="#333" sw={1.600}><path d="M3 7h14v15H3zM7 7V2h14v15h-4" /></Svg>
            <Svg s={14} sc="#333" sw={1.600}><path d="M2 2l20 20M22 2 2 22" /></Svg>
          </WinButtons>
        </PaintTitle>
        <Tabs>
          <FileTab>Archivo</FileTab>
          <Tab $active>Inicio</Tab>
          <Tab>Ver</Tab>
          <TabEnd>
            <Svg s={11} h={7} vb="0 0 11 7" sc="#aaa" sw={1.300}><path d="M1 6l4.500-4.500L10 6" /></Svg>
            <Help>?</Help>
          </TabEnd>
        </Tabs>
        <Ribbon>
          <Group $w={137}>
            <GroupBody>
              <BigTool $w={54}>
                <BigIcon><Clipboard /></BigIcon>
                <BigLabel>Pegar</BigLabel>
                <Caret />
              </BigTool>
              <SmallList $ml={6}>
                <SmallRow $muted $gap={6}><Scissors /><span>Cortar</span></SmallRow>
                <SmallRow $muted $gap={4}><CopyI /><span>Copiar</span></SmallRow>
              </SmallList>
            </GroupBody>
            <GroupLabel $pr={8}>Portapapeles</GroupLabel>
          </Group>
          <Group $w={230}>
            <GroupBody>
              <BigTool $w={74} $ml={7}>
                <BigIcon><SelectRect /></BigIcon>
                <BigLabel>Seleccionar</BigLabel>
                <Caret />
              </BigTool>
              <SmallList $ml={10}>
                <SmallRow $muted $gap={4}><CropI /><span>Recortar</span></SmallRow>
                <SmallRow $gap={4}><ResizeI /><span>Cambiar tamaño</span></SmallRow>
                <SmallRow $gap={3}><RotateI /><span>Girar</span><InlineCaret /></SmallRow>
              </SmallList>
            </GroupBody>
            <GroupLabel>Imagen</GroupLabel>
          </Group>
          <Group $w={100}>
            <GroupBody>
              <ToolGrid>
                <Pencil /><Bucket /><TextA />
                <Eraser /><Dropper /><Magnifier />
              </ToolGrid>
            </GroupBody>
            <GroupLabel>Herramientas</GroupLabel>
          </Group>
          <Group $w={71}>
            <GroupBody>
              <Brushes>
                <BrushTop><BrushBig /></BrushTop>
                <BigLabel>Pinceles</BigLabel>
                <Caret />
              </Brushes>
            </GroupBody>
          </Group>
          <Group $w={321}>
            <GroupBody>
              <Gallery>
                <ShapeGrid>{SHAPES.map((d, i) => <Shape key={i} d={d} />)}</ShapeGrid>
                <GalleryScroll>
                  <Svg s={7} h={5} vb="0 0 8 5"><path fill="#bbb" d="M4 0l4 5H0z" /></Svg>
                  <Svg s={7} h={5} vb="0 0 8 5"><path fill="#333" d="M4 5l4-5H0z" /></Svg>
                  <Svg s={8} h={9} vb="0 0 8 9"><path fill="#333" d="M0 0h8v1H0zM4 9l4-5H0z" /></Svg>
                </GalleryScroll>
              </Gallery>
              <SmallList $ml={8}>
                <SmallRow $muted $gap={4}><Contour /><span>Contorno</span><InlineCaret $muted /></SmallRow>
                <SmallRow $muted $gap={4}><Fill /><span>Rellenar</span><InlineCaret $muted /></SmallRow>
              </SmallList>
            </GroupBody>
            <GroupLabel>Formas</GroupLabel>
          </Group>
          <Group $w={71}>
            <GroupBody>
              <BigTool $w={68}>
                <BigIcon>
                  <Lines><Line $h={2} /><Line $h={4} /><Line $h={6} /><Line $h={9} /></Lines>
                </BigIcon>
                <BigLabel>Tamaño</BigLabel>
                <Caret />
              </BigTool>
            </GroupBody>
          </Group>
          <Group $w={446}>
            <GroupBody>
              <ColorSlot $active>
                <SwatchWrap><BigSwatch $c="#000" $s={40} $h={38} /></SwatchWrap>
                <BigLabel>Color<br />1</BigLabel>
              </ColorSlot>
              <ColorSlot>
                <SwatchWrap><BigSwatch $c="#fff" $s={30} $h={30} /></SwatchWrap>
                <BigLabel>Color<br />2</BigLabel>
              </ColorSlot>
              <Palette>
                {ROW1.map(c => <Cell key={c} $c={c} />)}
                {ROW2.map(c => <Cell key={c} $c={c} />)}
                {ROW1.map(c => <Cell key={c} />)}
              </Palette>
              <BigTool $w={50} $ml={1}>
                <BigIcon><RainbowBox><div /></RainbowBox></BigIcon>
                <BigLabel>Editar<br />colores</BigLabel>
              </BigTool>
            </GroupBody>
            <GroupLabel>Colores</GroupLabel>
          </Group>
          <Group $w={85}>
            <GroupBody>
              <BigTool $w={80}>
                <BigIcon><P3D /></BigIcon>
                <BigLabel>Editar con<br />Paint 3D</BigLabel>
              </BigTool>
            </GroupBody>
          </Group>
        </Ribbon>
        <Canvas>
          <Sheet>
            <SheetTitle>CALCULAR UNA VENTA</SheetTitle>
            <SheetRule />
            <BlueBox><BoxLabel>SP_VENTA</BoxLabel></BlueBox>
            <Arrow x={254} y={131} />
            <Arrow x={254} y={250} />
            <Arrow x={761} y={91} />
            <Arrow x={762} y={198} />
            <Arrow x={764} y={306} />
            <Param $x={144} $y={169}>@PRECIO</Param>
            <Param $x={114} $y={286}>@CANTIDAD</Param>
            <Param $x={873} $y={129}>@IMPORTE</Param>
            <Param $x={872} $y={235}>@IMPUESTO</Param>
            <Param $x={877} $y={340}>@TOTAL</Param>
            <Handle $x={1182} $y={251} />
            <Handle $x={590} $y={506} />
            <Handle $x={1182} $y={506} />
          </Sheet>
        </Canvas>
        <Status>
          <StatusCell $w={188} $pl={0}>
            <Svg s={14} sc="#555" sw={1.600}><path d="M12 1v22M1 12h22M8 5l4-4 4 4M8 19l4 4 4-4M5 8l-4 4 4 4M19 8l4 4-4 4" /></Svg>
          </StatusCell>
          <StatusCell $w={195} $pl={9}>
            <Svg s={16} sc="#667" sw={1.500}><path d="M8 5h2M14 5h2M20 5v3M20 12v3M8 20h2M14 20h2M8 9v2M8 14v2" /><path d="M3 1v6M1 3l2-2 2 2M4 21h18" /></Svg>
          </StatusCell>
          <StatusCell $w={195} $pl={7}>
            <Svg s={16} sc="#556" sw={1.500}><path d="M7 4h14v14H7zM3 1v20M1 3l2-2M5 3 3 1M3 22h20" /></Svg>
            <span>1890 × 808 píxeles</span>
          </StatusCell>
          <StatusCell $w={195} $pl={9}>
            <Svg s={14} sc="#445" sw={2}><path d="M2 2h20v20H2zM7 2v7h10V2M7 22v-8h10v8" /></Svg>
            <span>Tamaño: 28.4KB</span>
          </StatusCell>
          <ZoomBox>
            <ZoomPct>50%</ZoomPct>
            <RoundBtn>−</RoundBtn>
            <ZoomTrack><ZoomThumb /></ZoomTrack>
            <RoundBtn>+</RoundBtn>
          </ZoomBox>
        </Status>
        <InnerBar>
          <InnerSlot $w={21} $ml={14}><WinLogo s={21} /></InnerSlot>
          <InnerSlot $w={21} $ml={39}><SearchI s={21} /></InnerSlot>
          <InnerSlot $w={21} $ml={39}><TaskView s={21} /></InnerSlot>
          <InnerSlot $w={30} $ml={38}><Chrome s={30} /></InnerSlot>
          <AppBtn $ml={21} $pl={12} $gap={12}><FolderI s={18} h={26} /><span>CalcularVenta</span></AppBtn>
          <AppBtn $ml={11} $pl={9}><Hexa s={27} /><span>MVC - Apache Net...</span></AppBtn>
          <AppBtn $ml={11} $pl={9}><Ssms s={28} /><span>Microsoft SQL Serv...</span></AppBtn>
          <AppBtn $ml={10} $pl={8}><Connect s={30} /><span>Connect to Server</span></AppBtn>
          <AppBtn $ml={6} $w={201} $pl={14} $active><Palette3 s={29} /><span>CajaNegra.png - Pa...</span></AppBtn>
          <Tray>
            <TrayItem $w={16}><Up s={16} /></TrayItem>
            <TrayItem $w={20} $ml={11}>
              <Svg s={21} sc="#eee" sw={1.300}><path d="M6 4h17v13H6zM14 17v4M9 22h10M2 3h7v8H2zM5 11v6H6" /></Svg>
            </TrayItem>
            <TrayItem $w={20} $ml={10}><Speaker s={20} /></TrayItem>
            <TrayItem $w={24} $ml={15}>ESP</TrayItem>
            <Clock><span>10:42</span><span>10/10/2022</span></Clock>
          </Tray>
        </InnerBar>
      </Frame>
      <OuterBar>
        {SLOTS.map((s, i) => <Slot key={i} $on={s.on} $cur={s.cur}>{s.i}</Slot>)}
        <OuterTray>
          <OTray $w={30}><Weather /></OTray>
          <OTray $w={32} $ml={9} $fs={17}>16...</OTray>
          <OTray $w={16} $ml={14}><Up s={16} /></OTray>
          <OTray $w={18} $ml={14}><Shield /></OTray>
          <OTray $w={16} $ml={14}>
            <Svg s={16} sc="#eee" sw={1.300}><path d="M4 4h12v16H4zM16 10l5-3v10l-5-3M7 1h6M7 23h6" /></Svg>
          </OTray>
          <OTray $w={15} $ml={13}>
            <Svg s={16} h={22}><rect x="7" y="1" width="10" height="15" rx="5" fill="#f2f2f2" /><path stroke="#eee" strokeWidth="1.500" fill="none" d="M4 11c0 9 16 9 16 0M12 19v4M7 23h10" /></Svg>
          </OTray>
          <OTray $w={20} $ml={13}>
            <Svg s={20} h={14} sc="#eee" sw={1.500}><path d="M5 5h17v14H5zM23 9v6" /><path fill="#eee" d="M7 7h13v10H7zM1 10h4v4H1z" /></Svg>
          </OTray>
          <OTray $w={17} $ml={11}>
            <Svg s={17} sc="#ddd" sw={1.200}><path d="M2 20C3 11 10 4 22 2M6 21c1-6 6-12 16-14M10 22c1-4 5-9 12-10" /><circle cx="20" cy="20" r="2" fill="#eee" /></Svg>
          </OTray>
          <OTray $w={20} $ml={10}><Speaker s={19} /></OTray>
          <OTray $w={28} $ml={15}>ENG</OTray>
          <OTray $w={34} $ml={17}>10:36</OTray>
          <OTray $w={20} $ml={23}>
            <Svg s={21} sc="#eee" sw={1.400}><path d="M2 3h20v16h-7l-3 3-3-3H2z" /></Svg>
          </OTray>
          <OTray $w={31} />
        </OuterTray>
      </OuterBar>
    </Page>
  );
}
